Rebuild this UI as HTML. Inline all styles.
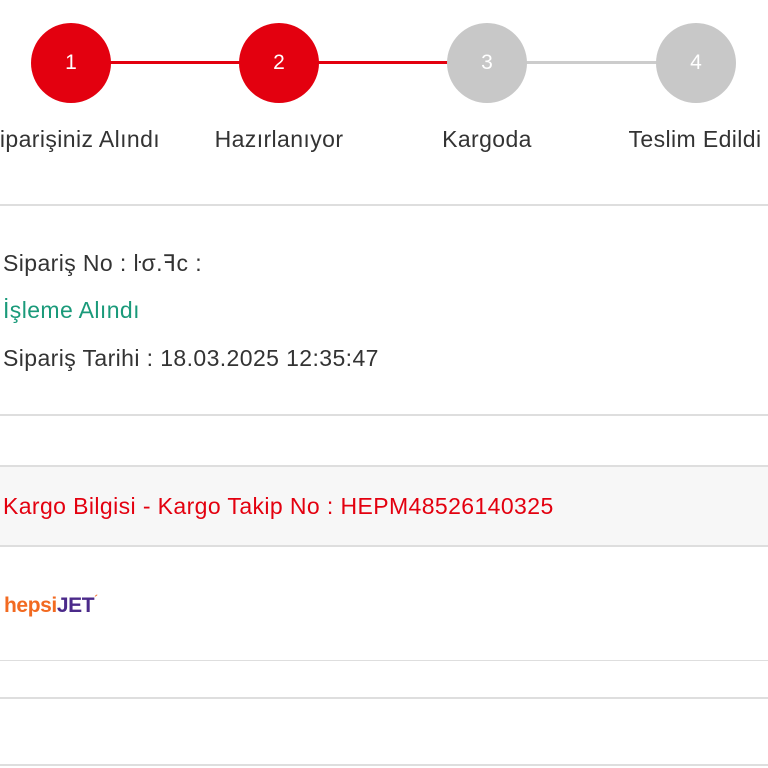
<!DOCTYPE html>
<html><head><meta charset="utf-8"><style>
body{margin:0;width:768px;height:768px;overflow:hidden;background:#fff;font-family:"Liberation Sans",sans-serif;position:relative}
.c{position:absolute;width:80px;height:80px;border-radius:50%;top:23px;color:#fff;font-size:21px;text-align:center;line-height:80px}
.l{position:absolute;top:61px;height:3px}
.t{position:absolute;top:126px;font-size:23px;letter-spacing:0.4px;color:#333;white-space:nowrap;width:240px;text-align:center}
.hr{position:absolute;left:0;width:768px;height:2px;background:#dedede}
.x{position:absolute;left:3px;font-size:23px;letter-spacing:0.4px;color:#333;white-space:nowrap}
</style></head><body>
<div class="l" style="left:70px;width:210px;background:#e3000f"></div>
<div class="l" style="left:280px;width:210px;background:#e3000f"></div>
<div class="l" style="left:490px;width:210px;background:#ccc"></div>
<div class="c" style="left:31px;background:#e3000f">1</div>
<div class="c" style="left:239px;background:#e3000f">2</div>
<div class="c" style="left:447px;background:#c8c8c8">3</div>
<div class="c" style="left:656px;background:#c8c8c8">4</div>
<div class="t" style="left:-40px">iparişiniz Alındı</div>
<div class="t" style="left:159px">Hazırlanıyor</div>
<div class="t" style="left:367px">Kargoda</div>
<div class="t" style="left:575px">Teslim Edildi</div>
<div class="hr" style="top:204px"></div>
<div class="x" style="top:250px">Sipariş No : ŀσ.ꟻc :</div>
<div class="x" style="top:297px;color:#1a9a7a">İşleme Alındı</div>
<div class="x" style="top:345px">Sipariş Tarihi : 18.03.2025 12:35:47</div>
<div class="hr" style="top:414px"></div>
<div style="position:absolute;left:0;top:465px;width:768px;height:82px;background:#f7f7f7;border-top:2px solid #dedede;border-bottom:2px solid #dedede;box-sizing:border-box"></div>
<div class="x" style="top:493px;color:#e3000f">Kargo Bilgisi - Kargo Takip No : HEPM48526140325</div>
<div style="position:absolute;left:4px;top:594px;font-size:21px;font-weight:bold;letter-spacing:-0.4px"><span style="color:#f26a21">hepsi</span><span style="color:#4b2a8a">JET</span><span style="color:#f26a21;font-size:11px;vertical-align:top">´</span></div>
<div class="hr" style="top:660px;height:1px"></div>
<div class="hr" style="top:697px"></div>
<div class="hr" style="top:764px"></div>
</body></html>
